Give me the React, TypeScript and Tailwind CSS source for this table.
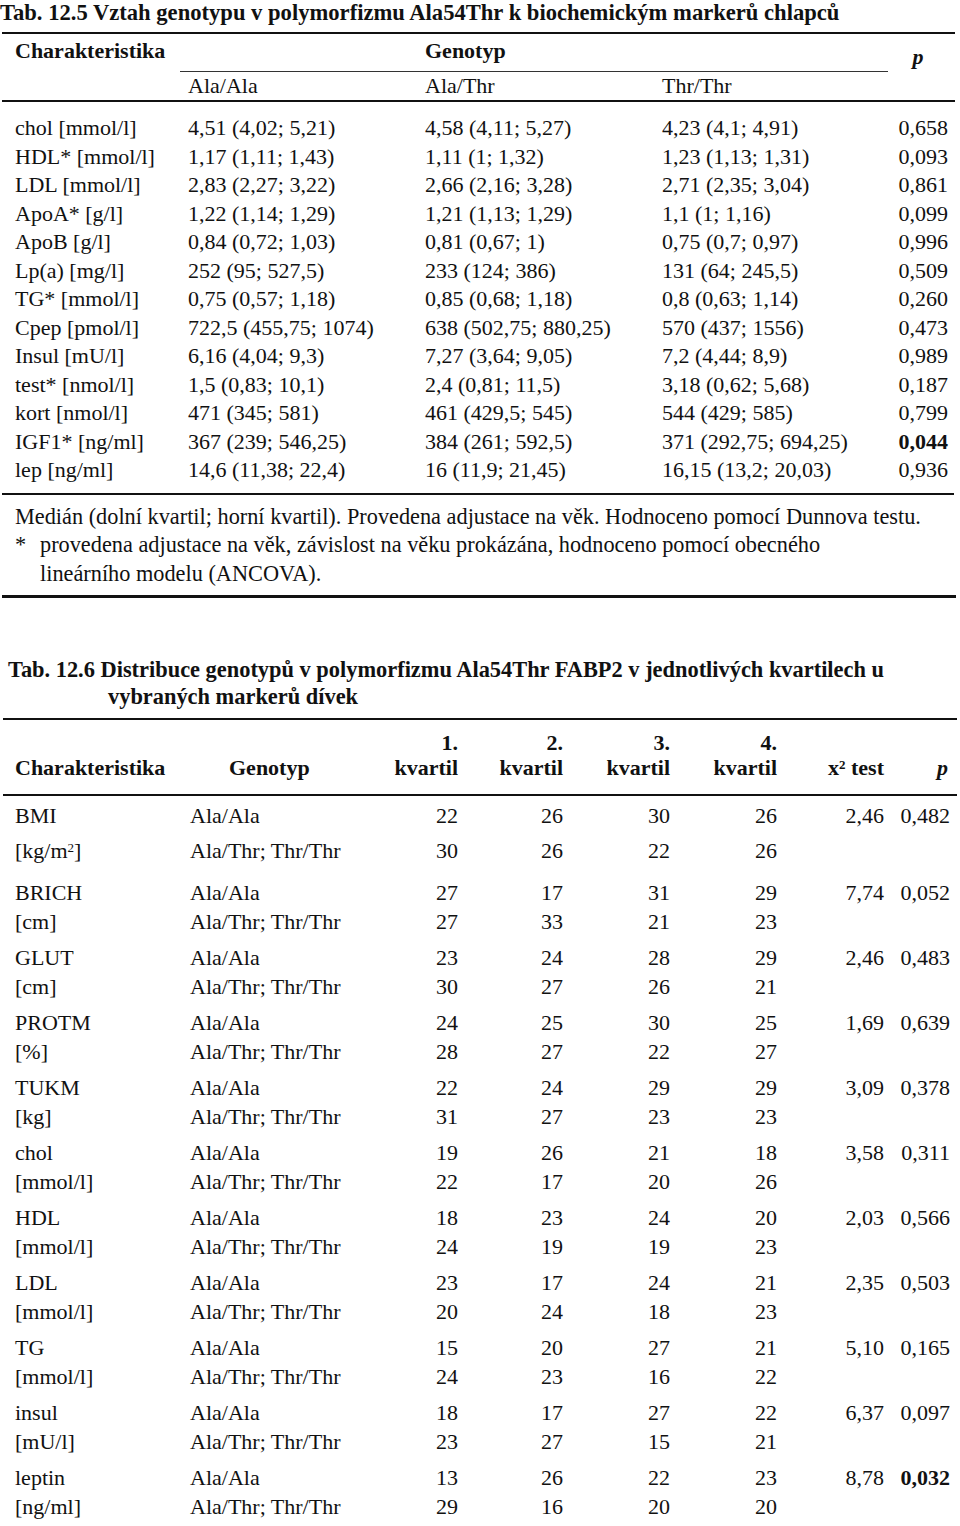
import React from 'react';

// Tab. 12.5 – median (quartiles) per genotype
const boys = [
  { name: 'chol [mmol/l]', a: '4,51 (4,02; 5,21)', b: '4,58 (4,11; 5,27)', c: '4,23 (4,1; 4,91)', p: '0,658' },
  { name: 'HDL* [mmol/l]', a: '1,17 (1,11; 1,43)', b: '1,11 (1; 1,32)', c: '1,23 (1,13; 1,31)', p: '0,093' },
  { name: 'LDL [mmol/l]', a: '2,83 (2,27; 3,22)', b: '2,66 (2,16; 3,28)', c: '2,71 (2,35; 3,04)', p: '0,861' },
  { name: 'ApoA* [g/l]', a: '1,22 (1,14; 1,29)', b: '1,21 (1,13; 1,29)', c: '1,1 (1; 1,16)', p: '0,099' },
  { name: 'ApoB [g/l]', a: '0,84 (0,72; 1,03)', b: '0,81 (0,67; 1)', c: '0,75 (0,7; 0,97)', p: '0,996' },
  { name: 'Lp(a) [mg/l]', a: '252 (95; 527,5)', b: '233 (124; 386)', c: '131 (64; 245,5)', p: '0,509' },
  { name: 'TG* [mmol/l]', a: '0,75 (0,57; 1,18)', b: '0,85 (0,68; 1,18)', c: '0,8 (0,63; 1,14)', p: '0,260' },
  { name: 'Cpep [pmol/l]', a: '722,5 (455,75; 1074)', b: '638 (502,75; 880,25)', c: '570 (437; 1556)', p: '0,473' },
  { name: 'Insul [mU/l]', a: '6,16 (4,04; 9,3)', b: '7,27 (3,64; 9,05)', c: '7,2 (4,44; 8,9)', p: '0,989' },
  { name: 'test* [nmol/l]', a: '1,5 (0,83; 10,1)', b: '2,4 (0,81; 11,5)', c: '3,18 (0,62; 5,68)', p: '0,187' },
  { name: 'kort [nmol/l]', a: '471 (345; 581)', b: '461 (429,5; 545)', c: '544 (429; 585)', p: '0,799' },
  { name: 'IGF1* [ng/ml]', a: '367 (239; 546,25)', b: '384 (261; 592,5)', c: '371 (292,75; 694,25)', p: '0,044', bold: true },
  { name: 'lep [ng/ml]', a: '14,6 (11,38; 22,4)', b: '16 (11,9; 21,45)', c: '16,15 (13,2; 20,03)', p: '0,936' },
];

// Tab. 12.6 – counts per quartile
const girls = [
  { name: 'BMI', unit: 'kg/m2', r1: ['22', '26', '30', '26'], r2: ['30', '26', '22', '26'], chi: '2,46', p: '0,482' },
  { name: 'BRICH', unit: '[cm]', r1: ['27', '17', '31', '29'], r2: ['27', '33', '21', '23'], chi: '7,74', p: '0,052' },
  { name: 'GLUT', unit: '[cm]', r1: ['23', '24', '28', '29'], r2: ['30', '27', '26', '21'], chi: '2,46', p: '0,483' },
  { name: 'PROTM', unit: '[%]', r1: ['24', '25', '30', '25'], r2: ['28', '27', '22', '27'], chi: '1,69', p: '0,639' },
  { name: 'TUKM', unit: '[kg]', r1: ['22', '24', '29', '29'], r2: ['31', '27', '23', '23'], chi: '3,09', p: '0,378' },
  { name: 'chol', unit: '[mmol/l]', r1: ['19', '26', '21', '18'], r2: ['22', '17', '20', '26'], chi: '3,58', p: '0,311' },
  { name: 'HDL', unit: '[mmol/l]', r1: ['18', '23', '24', '20'], r2: ['24', '19', '19', '23'], chi: '2,03', p: '0,566' },
  { name: 'LDL', unit: '[mmol/l]', r1: ['23', '17', '24', '21'], r2: ['20', '24', '18', '23'], chi: '2,35', p: '0,503' },
  { name: 'TG', unit: '[mmol/l]', r1: ['15', '20', '27', '21'], r2: ['24', '23', '16', '22'], chi: '5,10', p: '0,165' },
  { name: 'insul', unit: '[mU/l]', r1: ['18', '17', '27', '22'], r2: ['23', '27', '15', '21'], chi: '6,37', p: '0,097' },
  { name: 'leptin', unit: '[ng/ml]', r1: ['13', '26', '22', '23'], r2: ['29', '16', '20', '20'], chi: '8,78', p: '0,032', bold: true },
];

const cols2 = 'grid grid-cols-[175px_170px_98px_105px_107px_107px_107px_66px] pl-[15px]';

const App = () => {
  return (
    <div className="w-[960px] h-[1526px] bg-white text-[#111] font-['Liberation_Serif',serif] text-[22px] overflow-hidden">
      {/* Tab. 12.5 */}
      <div className="font-bold text-[22.6px] leading-[26px] whitespace-nowrap">
        Tab. 12.5 Vztah genotypu v polymorfizmu Ala54Thr k biochemickým markerů chlapců
      </div>
      <div className="mt-[6px] ml-[2px] mr-[5px] h-[2px] bg-[#111]" />

      {/* header */}
      <div className="grid grid-cols-[173px_237px_237px_226px_1fr] pl-[15px] pr-[12px] leading-[28px]">
        <div className="h-[37px] pt-[3px] font-bold">Charakteristika</div>
        <div />
        <div className="h-[37px] pt-[3px] font-bold">Genotyp</div>
        <div />
        <div className="row-span-3 self-start text-center font-bold italic pt-[9px]">p</div>
        <div />
        <div className="col-span-3 h-px bg-[#333] ml-[-8px]" />
        <div>&nbsp;</div>
        <div>Ala/Ala</div>
        <div>Ala/Thr</div>
        <div>Thr/Thr</div>
      </div>
      <div className="ml-[2px] mr-[5px] h-[2px] bg-[#111]" />

      {/* body */}
      <div className="pt-[12px] pb-[8px] pl-[15px] pr-[12px]">
        {boys.map((r) => (
          <div key={r.name} className="grid grid-cols-[173px_237px_237px_1fr] leading-[28.5px] whitespace-nowrap">
            <div>{r.name}</div>
            <div>{r.a}</div>
            <div>{r.b}</div>
            <div className="flex justify-between">
              <span>{r.c}</span>
              <span className={r.bold ? 'font-bold' : ''}>{r.p}</span>
            </div>
          </div>
        ))}
      </div>
      <div className="ml-[2px] mr-[6px] h-[2px] bg-[#111]" />

      {/* footnote */}
      <div className="pt-[8px] pb-[7px] pl-[15px] leading-[28.5px] text-[22.3px] whitespace-nowrap">
        <div>Medián (dolní kvartil; horní kvartil). Provedena adjustace na věk. Hodnoceno pomocí Dunnova testu.</div>
        <div className="flex">
          <span className="w-[25px] shrink-0">*</span>
          <span>
            provedena adjustace na věk, závislost na věku prokázána, hodnoceno pomocí obecného
            <br />
            lineárního modelu (ANCOVA).
          </span>
        </div>
      </div>
      <div className="ml-[2px] mr-[4px] h-[3px] bg-[#111]" />

      {/* Tab. 12.6 */}
      <div className="mt-[58px] pl-[8px] font-bold text-[22.4px] leading-[27px] whitespace-nowrap">
        <div>Tab. 12.6 Distribuce genotypů v polymorfizmu Ala54Thr FABP2 v jednotlivých kvartilech u</div>
        <div className="pl-[100px]">vybraných markerů dívek</div>
      </div>
      <div className="mt-[8px] ml-[3px] mr-[3px] h-[2px] bg-[#111]" />

      <div className={`${cols2} items-end font-bold leading-[25px] pt-[10px] pb-[14px]`}>
        <div>Charakteristika</div>
        <div className="pl-[39px]">Genotyp</div>
        {['1.', '2.', '3.', '4.'].map((k) => (
          <div key={k} className="text-right">
            <div>{k}</div>
            <div>kvartil</div>
          </div>
        ))}
        <div className="text-right">
          x<sup className="text-[13px]">2</sup> test
        </div>
        <div className="text-right italic pr-[2px]">p</div>
      </div>
      <div className="ml-[3px] mr-[3px] h-[2px] bg-[#111]" />

      <div className="pt-[5px] pb-[7px]">
        {girls.map((g, i) => (
          <div key={g.name} className={i === 0 ? 'pb-[6px]' : 'pt-[7px]'}>
            <div className={`${cols2} leading-[29px] whitespace-nowrap`}>
              <div>{g.name}</div>
              <div>Ala/Ala</div>
              {g.r1.map((v, j) => (
                <div key={j} className="text-right">{v}</div>
              ))}
              <div className="text-right">{g.chi}</div>
              <div className={`text-right ${g.bold ? 'font-bold' : ''}`}>{g.p}</div>
            </div>
            <div className={`${cols2} leading-[29px] whitespace-nowrap ${i === 0 ? 'mt-[6px]' : ''}`}>
              <div>
                {g.unit === 'kg/m2' ? (
                  <>
                    [kg/m<sup className="text-[13px]">2</sup>]
                  </>
                ) : (
                  g.unit
                )}
              </div>
              <div>Ala/Thr; Thr/Thr</div>
              {g.r2.map((v, j) => (
                <div key={j} className="text-right">{v}</div>
              ))}
              <div />
              <div />
            </div>
          </div>
        ))}
      </div>
      <div className="ml-[3px] mr-[3px] h-[3px] bg-[#111]" />
    </div>
  );
};

export default App;
